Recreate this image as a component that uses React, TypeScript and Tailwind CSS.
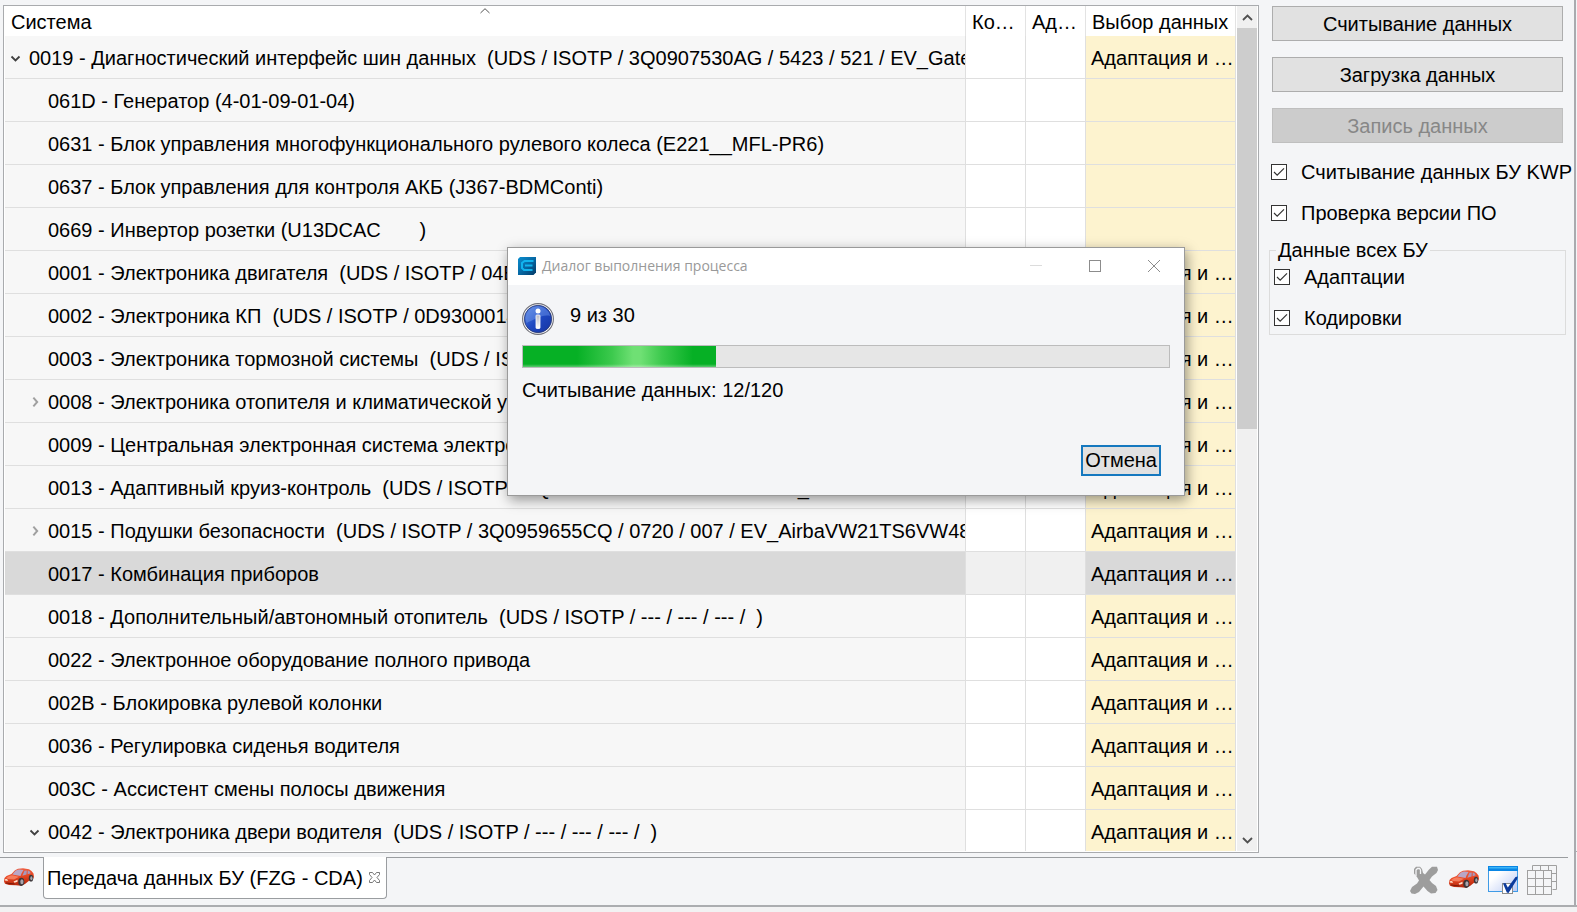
import React from "react";

type Row = {
  text: string;
  level?: 0 | 1;
  expander?: "open" | "closed";
  data?: boolean;
  selected?: boolean;
};

const rows: Row[] = [
  { text: "0019 - Диагностический интерфейс шин данных  (UDS / ISOTP / 3Q0907530AG / 5423 / 521 / EV_Gateway)", level: 0, expander: "open", data: true },
  { text: "061D - Генератор (4-01-09-01-04)" },
  { text: "0631 - Блок управления многофункционального рулевого колеса (E221__MFL-PR6)" },
  { text: "0637 - Блок управления для контроля АКБ (J367-BDMConti)" },
  { text: "0669 - Инвертор розетки (U13DCAC       )" },
  { text: "0001 - Электроника двигателя  (UDS / ISOTP / 04E906027)", data: true },
  { text: "0002 - Электроника КП  (UDS / ISOTP / 0D9300014)", data: true },
  { text: "0003 - Электроника тормозной системы  (UDS / ISOTP)", data: true },
  { text: "0008 - Электроника отопителя и климатической установки", expander: "closed", data: true },
  { text: "0009 - Центральная электронная система электрооборудования", data: true },
  { text: "0013 - Адаптивный круиз-контроль  (UDS / ISOTP / 3Q0907561D / 0665 / 001 / EV_ACCBOSCHVW416AA0", data: true },
  { text: "0015 - Подушки безопасности  (UDS / ISOTP / 3Q0959655CQ / 0720 / 007 / EV_AirbaVW21TS6VW48X", expander: "closed", data: true },
  { text: "0017 - Комбинация приборов", data: true, selected: true },
  { text: "0018 - Дополнительный/автономный отопитель  (UDS / ISOTP / --- / --- / --- /  )", data: true },
  { text: "0022 - Электронное оборудование полного привода", data: true },
  { text: "002B - Блокировка рулевой колонки", data: true },
  { text: "0036 - Регулировка сиденья водителя", data: true },
  { text: "003C - Ассистент смены полосы движения", data: true },
  { text: "0042 - Электроника двери водителя  (UDS / ISOTP / --- / --- / --- /  )", expander: "open", data: true },
];

function Chevron({ className, d = "M1.5 2.5 5.5 6.5 9.5 2.5" }: { className?: string; d?: string }) {
  return (
    <svg viewBox="0 0 11 9" className={className} fill="none" stroke="currentColor" strokeWidth="1.8" aria-hidden="true">
      <path d={d} />
    </svg>
  );
}

function Expander({ kind }: { kind?: "open" | "closed" }) {
  if (kind === "open")
    return (
      <button aria-label="Свернуть" className="flex w-[13px] shrink-0 text-[#404040]">
        <Chevron className="h-[9px] w-[11px]" />
      </button>
    );
  if (kind === "closed")
    return (
      <button aria-label="Развернуть" className="flex w-[13px] shrink-0 text-[#a0a0a0]">
        <Chevron className="h-[10px] w-[12px]" d="M4 .5 7.500 4.500 4 8.500" />
      </button>
    );
  return <span className="w-[13px] shrink-0" />;
}

function CarIcon() {
  return (
    <svg viewBox="0 0 30 19" className="h-[19px] w-[30px]" aria-hidden="true">
      <defs>
        <linearGradient id="carBody" x1="0" y1="0" x2="0.2" y2="1">
          <stop offset="0" stopColor="#f0654a" />
          <stop offset="0.5" stopColor="#ea4a26" />
          <stop offset="1" stopColor="#b8290d" />
        </linearGradient>
      </defs>
      <path d="M0 13.500.5 10 2.500 8 7.500 6 11 2.200 14 .8 19 .2 25 1.200 27.500 3 29.500 5.500 30 9 28.500 12 25 12.800 21 16 17 17.800 12 17.200 5 17 1 15.800Z" fill="url(#carBody)" />
      <path d="M8.300 6.500 11.800 2.600 15 1.600 19.500 2 17.500 5.500 16.500 8Z" fill="#b9a6c6" />
      <path d="M18.300 7.800 20.500 2.700 22.800 2.500 22.500 6.600ZM23.600 6.300 23.700 2.600 25.300 3 26.800 5.200Z" fill="#a898bb" />
      <path d="M2 10 5 8 8 7.300 15 8.800 10 11.500 4 11Z" fill="#f98a6c" opacity=".8" />
      <path d="M.8 11.300 3 11 4.200 12.800 1.300 12.800ZM9.500 13.500 13.500 11.800 13.500 13.800 10.500 14.800Z" fill="#ffe0cc" />
      <path d="M2 15 10.500 16" stroke="#7d1a08" strokeWidth="1.100" />
      <ellipse cx="17.300" cy="13.800" rx="3" ry="4.100" fill="#3b3639" />
      <ellipse cx="17.900" cy="13.700" rx="1.600" ry="2.500" fill="#aaa5ac" />
      <ellipse cx="27" cy="10.200" rx="2.200" ry="3.400" fill="#3b3639" />
      <ellipse cx="27.400" cy="10.200" rx="1.100" ry="2" fill="#aaa5ac" />
    </svg>
  );
}

function CrossIcon() {
  return (
    <svg viewBox="0 0 28 28" className="h-[28px] w-[28px]" aria-hidden="true">
      <path
        d="M4 3 6 .8H10L12 3 13 7 15 8.500 19 3.500 22 .8H27L28 4 26.500 7 22 10.500 19.500 14 22 17 26 20 27.500 24 25.500 27 21 27.500 17.500 25 13.500 20.500 9 26 5 28 1.500 27.500 0 25 2 21 7 17.500 9 14.500 7 11 4 7.500Z"
        fill="#9d9d9d"
      />
      <path d="M6 10V4L7.500 2.500H9.500L10.500 4V8" fill="none" stroke="#f4f5f7" strokeWidth="1.300" />
    </svg>
  );
}

function WindowCheckIcon() {
  return (
    <svg viewBox="0 0 30 28" className="h-[28px] w-[30px]" aria-hidden="true">
      <defs>
        <linearGradient id="winFill" x1="0" y1="0" x2="1" y2="1">
          <stop offset="0.3" stopColor="#ffffff" />
          <stop offset="1" stopColor="#b9c9f5" />
        </linearGradient>
      </defs>
      <rect x=".5" y=".5" width="29" height="25" fill="url(#winFill)" stroke="#3f9be6" />
      <rect x="0" y="0" width="30" height="5" fill="#0a86e4" />
      <rect x="1" y="1" width="28" height="1.500" fill="#3bb4f7" />
      <rect x="14.500" y="17.500" width="10" height="10" fill="#fff" stroke="#8c8c8c" />
      <path d="M15 17.500 17.500 17 19.800 21.500 27.500 11 29.800 10.500 29 13.500 20.500 27 18.800 26.500Z" fill="#0c3a9c" />
    </svg>
  );
}

function GridsIcon() {
  return (
    <svg viewBox="0 0 30 30" className="h-[30px] w-[30px]" fill="none" stroke="#a0a0a0" aria-hidden="true">
      <path d="M5.500 5V.5H29.500V24.500H25.500M13.500 .5V5M21.500 .5V5M25 8.500H29.500M25 16.500H29.500" />
      <rect x=".5" y="5.500" width="24" height="24" />
      <path d="M8.500 5.500V29.500M16.500 5.500V29.500M.5 13.500H24.500M.5 21.500H24.500" />
    </svg>
  );
}

function AppIcon() {
  return (
    <svg viewBox="0 0 18 18" className="h-[18px] w-[18px]" aria-hidden="true">
      <defs>
        <linearGradient id="appFill" x1="0" y1="0" x2="1" y2="1">
          <stop offset="0" stopColor="#0a8fd0" />
          <stop offset="0.5" stopColor="#0668a4" />
          <stop offset="1" stopColor="#043a66" />
        </linearGradient>
      </defs>
      <path d="M2 0H18V15.500L15.500 18H0V2Z" fill="url(#appFill)" />
      <path d="M15.500 4H6.500L4 6V11L6 13H14.500M7 8.500H14.500" fill="none" stroke="#12b4ee" strokeWidth="2" />
    </svg>
  );
}

function InfoIcon() {
  return (
    <svg viewBox="0 0 32 32" className="h-[32px] w-[32px] shrink-0" aria-hidden="true">
      <defs>
        <linearGradient id="infoFill" x1="0" y1="0" x2="1" y2="1">
          <stop offset="0" stopColor="#5f8be6" />
          <stop offset="0.5" stopColor="#1f49c2" />
          <stop offset="1" stopColor="#1533a0" />
        </linearGradient>
        <linearGradient id="infoStem" x1="0" y1="0" x2="0" y2="1">
          <stop offset="0" stopColor="#b9b9c4" />
          <stop offset="1" stopColor="#ffffff" />
        </linearGradient>
      </defs>
      <circle cx="16" cy="16" r="15.400" fill="#fff" stroke="#6f6f78" strokeWidth="1.100" />
      <circle cx="16" cy="16" r="13.700" fill="url(#infoFill)" stroke="#27366f" strokeWidth=".8" />
      <path d="M3.500 14.500A12.600 12.600 0 0 1 28.300 13C20 11 12 17 4.500 20Z" fill="#7ea4f0" opacity=".4" />
      <circle cx="16" cy="8" r="2.500" fill="#fff" />
      <rect x="14" y="12" width="4" height="13.500" rx=".8" fill="url(#infoStem)" stroke="#fff" strokeWidth=".8" />
    </svg>
  );
}

function CheckBox({ id, label }: { id: string; label: string }) {
  return (
    <div className="flex h-[25px] items-center gap-[14px]">
      <span className="relative flex size-4 shrink-0">
        <input
          id={id}
          type="checkbox"
          defaultChecked
          className="peer size-4 appearance-none border border-[#333] bg-white"
        />
        <svg
          viewBox="0 0 16 16"
          className="pointer-events-none absolute inset-0 hidden size-4 peer-checked:block"
          fill="none"
          stroke="#333"
          strokeWidth="1.200"
          aria-hidden="true"
        >
          <path d="M3 8 6.200 11.200 13 4.400" />
        </svg>
      </span>
      <label htmlFor={id} className="whitespace-nowrap">
        {label}
      </label>
    </div>
  );
}

function SystemTable() {
  return (
    <table className="w-full table-fixed border-separate border-spacing-0">
      <colgroup>
        <col />
        <col className="w-[60px]" />
        <col className="w-[60px]" />
        <col className="w-[150px]" />
      </colgroup>
      <thead>
        <tr className="text-left whitespace-nowrap">
          <th className="relative h-[30px] border-r border-[#e3e3e3] pt-[2px] pl-[6px] font-normal">
            Система
            <svg viewBox="0 0 10 6" className="absolute inset-x-0 top-[2px] mx-auto h-[6px] w-[10px]" fill="none" stroke="#555" aria-hidden="true">
              <path d="M.5 5 5 .7 9.500 5" />
            </svg>
          </th>
          <th className="border-r border-[#e3e3e3] pt-[2px] pl-[6px] font-normal">Ко…</th>
          <th className="border-r border-[#e3e3e3] pt-[2px] pl-[6px] font-normal">Ад…</th>
          <th className="border-r border-[#e3e3e3] pt-[2px] pl-[6px] font-normal">Выбор данных</th>
        </tr>
      </thead>
      <tbody>
        {rows.map((r) => (
          <tr key={r.text} className="whitespace-pre">
            <td className={`h-[43px] overflow-hidden border-r border-b border-[#dfdfdf] p-0 pt-[2px] ${r.selected ? "bg-[#d9d9d9]" : "bg-[#f7f7f7]"}`}>
              <div className={`flex items-center gap-[6px] overflow-hidden ${r.level === 0 ? "pl-[5px]" : "pl-[24px]"}`}>
                <Expander kind={r.expander} />
                <span>{r.text}</span>
              </div>
            </td>
            <td className={`border-r border-b border-[#dfdfdf] ${r.selected ? "bg-[#f0f0f0]" : "bg-white"}`} />
            <td className={`border-r border-b border-[#dfdfdf] ${r.selected ? "bg-[#f0f0f0]" : "bg-white"}`} />
            <td className={`overflow-hidden border-r border-b border-[#dfdfdf] p-0 pt-[2px] pl-[5px] ${r.selected ? "bg-[#d9d9d9]" : "bg-[#fdf3cf]"}`}>
              {r.data ? "Адаптация и …" : ""}
            </td>
          </tr>
        ))}
      </tbody>
    </table>
  );
}

function ProgressDialog() {
  return (
    <div
      role="dialog"
      aria-labelledby="dialog-title"
      className="absolute top-[247px] left-[507px] w-[678px] border border-[#9a9a9a] bg-[#f4f5f7] shadow-[2px_4px_12px_rgba(0,0,0,0.4)]"
    >
      <div className="flex h-[37px] items-center bg-white pr-px pb-px pl-[10px]">
        <AppIcon />
        <h2 id="dialog-title" className="flex-1 pl-[6px] font-['Open_Sans','Noto_Sans',sans-serif] text-[14px] text-[#999]">
          Диалог выполнения процесса
        </h2>
        <button aria-label="Свернуть окно" disabled className="flex w-[59px] justify-center">
          <svg viewBox="0 0 12 12" className="size-3" stroke="#dcdcdc" aria-hidden="true">
            <path d="M0 5.500H12" />
          </svg>
        </button>
        <button aria-label="Развернуть окно" className="flex w-[59px] justify-center">
          <svg viewBox="0 0 12 12" className="size-3" fill="none" stroke="#8c8c8c" aria-hidden="true">
            <rect x=".5" y=".5" width="11" height="11" />
          </svg>
        </button>
        <button aria-label="Закрыть окно" className="flex w-[59px] justify-center">
          <svg viewBox="0 0 12 12" className="size-3" stroke="#8c8c8c" aria-hidden="true">
            <path d="M0 0 12 12M12 0 0 12" />
          </svg>
        </button>
      </div>
      <div className="flex flex-col px-[14px] pt-[18px] pb-[19px]">
        <div className="flex items-start gap-4">
          <InfoIcon />
          <span>9 из 30</span>
        </div>
        <div
          role="progressbar"
          aria-valuemin={0}
          aria-valuemax={30}
          aria-valuenow={9}
          aria-label="Считывание данных"
          className="mt-[10px] flex h-[23px] border border-[#bcbcbc] bg-[#e6e6e6]"
        >
          <div
            className="bg-[linear-gradient(0deg,rgba(255,255,255,0.35),transparent_14%),linear-gradient(90deg,#06b025_28%,#3cc94d_46%,#6fe074_57%,#6fe074_61%,#3cc94d_72%,#06b025_88%)]"
            style={{ width: "29.8%" }}
          />
        </div>
        <p className="mt-[10px]">Считывание данных: 12/120</p>
        <button className="mt-[43px] mr-[9px] h-[31px] self-end border-2 border-[#1578bf] bg-[#e1e1e1] px-[2px] leading-[27px]">
          Отмена
        </button>
      </div>
    </div>
  );
}

export default function App() {
  return (
    <div className="relative flex h-screen flex-col overflow-hidden bg-[#f4f5f7] font-['Liberation_Sans',Arial,sans-serif] text-[20px] leading-[24px] text-black">
      <div className="flex min-h-0 flex-1">
        <div className="flex min-w-0 flex-1 flex-col">
          <main className="flex min-h-0 flex-1 gap-[10px] pt-[5px] pr-2 pb-1 pl-[3px]">
            <section className="flex min-w-0 flex-1 border border-[#a9abae] bg-white px-px pb-px">
              <div className="min-w-0 flex-1 overflow-hidden">
                <SystemTable />
              </div>
              <div className="ml-px flex w-[20px] shrink-0 flex-col items-center bg-[#f0f0f0] text-[#505050]" aria-hidden="true">
                <div className="flex h-[22px] items-center">
                  <Chevron className="h-[9px] w-[11px]" d="M1 7 5.500 2.500 10 7" />
                </div>
                <div className="flex w-full flex-1 flex-col">
                  <div className="w-full bg-[#cdcdcd]" style={{ height: "50%" }} />
                </div>
                <div className="flex h-[22px] items-center">
                  <Chevron className="h-[9px] w-[11px]" d="M1 2 5.500 6.500 10 2" />
                </div>
              </div>
            </section>
            <aside className="flex w-[297px] shrink-0 flex-col">
              <div className="flex flex-col gap-4 pt-px pr-[3px] pl-[3px]">
                <button className="h-[35px] border border-[#adadad] bg-[#e1e1e1]">Считывание данных</button>
                <button className="h-[35px] border border-[#adadad] bg-[#e1e1e1]">Загрузка данных</button>
                <button disabled className="h-[35px] border border-[#bfbfbf] bg-[#cccccc] text-[#878787]">
                  Запись данных
                </button>
              </div>
              <div className="flex flex-col gap-4 pt-4 pl-[2px]">
                <CheckBox id="kwp" label="Считывание данных БУ KWP" />
                <CheckBox id="version" label="Проверка версии ПО" />
              </div>
              <fieldset className="mt-[13px] border border-[#dcdcdc] pb-1 pl-1">
                <legend className="ml-[2px] h-[24px] px-[2px]">Данные всех БУ</legend>
                <div className="flex flex-col gap-4 pt-[2px]">
                  <CheckBox id="adaptations" label="Адаптации" />
                  <CheckBox id="codings" label="Кодировки" />
                </div>
              </fieldset>
            </aside>
          </main>
          <footer className="mr-[6px] flex h-[48px] items-start">
            <div className="flex h-[40px] w-[43px] items-center border-t border-[#9a9da0] pl-1">
              <CarIcon />
            </div>
            <div className="flex h-[42px] items-center gap-[6px] rounded-b border border-t-0 border-[#9a9da0] bg-white pr-[6px] pl-[3px] whitespace-nowrap">
              <span>Передача данных БУ (FZG - CDA)</span>
              <button aria-label="Закрыть вкладку">
                <svg viewBox="0 0 11 11" className="size-[11px]" fill="#fff" stroke="#6a6a6a" strokeWidth=".9" aria-hidden="true">
                  <path d="M.5 .5H3.500L5.500 3 7.500 .5H10.500V2.500L8 5.500 10.500 8.500V10.500H7.500L5.500 8 3.500 10.500H.5V8.500L3 5.500 .5 2.500Z" />
                </svg>
              </button>
            </div>
            <div className="flex h-[48px] flex-1 items-center justify-end gap-[9px] border-t border-[#9a9da0] pr-[11px] pb-1">
              <button aria-label="Удалить" className="mr-[2px]"><CrossIcon /></button>
              <button aria-label="Автомобиль"><CarIcon /></button>
              <button aria-label="Выбор"><WindowCheckIcon /></button>
              <button aria-label="Таблицы"><GridsIcon /></button>
            </div>
          </footer>
        </div>
        <div className="w-[2px] bg-[#a9abaf]" />
        <div className="flex w-[1px] flex-col pt-[851px]">
          <div className="h-px bg-[#a9abaf]" />
        </div>
      </div>
      <div className="h-[7px] shrink-0 border-t-2 border-[#abadb0] bg-[#f2f2f3]" />
      <ProgressDialog />
    </div>
  );
}
